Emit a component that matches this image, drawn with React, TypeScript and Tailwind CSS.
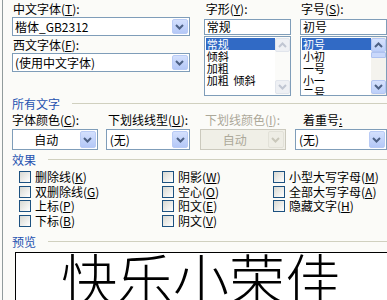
import React from "react";

const Chevron = ({ color, up }: { color: string; up?: boolean }) => (
  <svg width="9" height="6" viewBox="0 0 9 6">
    <path d={up ? "M1 5 L4.5 1.5 L8 5" : "M1 1 L4.5 4.5 L8 1"} fill="none" stroke={color} strokeWidth="2" />
  </svg>
);

function Combo({
  text,
  className,
  center,
  disabled,
}: {
  text: string;
  className: string;
  center?: boolean;
  disabled?: boolean;
}) {
  return (
    <div
      className={`flex border ${disabled ? "border-[#cbc9bd] bg-[#f0efe7]" : "border-[#7f9db9] bg-white"} ${className}`}
    >
      <div
        className={`flex-1 flex items-center ${center ? "justify-center" : "pl-[2px]"} ${disabled ? "text-[#aca899]" : "text-black"}`}
      >
        {text}
      </div>
      <div
        className={`my-[1px] mr-[1px] w-[16px] rounded-[2px] border flex items-center justify-center ${
          disabled
            ? "border-[#e2e1d8] bg-[#eeede5]"
            : "border-[#b9cbf5] bg-linear-to-b from-[#d4e0fd] to-[#b4c8f7]"
        }`}
      >
        <Chevron color={disabled ? "#c9c7ba" : "#4d6185"} />
      </div>
    </div>
  );
}

function ScrollBar({ enabled }: { enabled: boolean }) {
  const btn = enabled
    ? "border-[#b4c6f1] bg-linear-to-b from-[#d6e2fd] to-[#bccff9]"
    : "border-[#e1e5ec] bg-[#eef0f4]";
  const arrow = enabled ? "#4d6185" : "#c0c6d2";
  return (
    <div className={`w-[15px] flex flex-col py-[1px] ${enabled ? "bg-[#f4f3ee]" : "bg-[#fbfbf9]"}`}>
      <div className={`h-[14px] border rounded-[2px] flex items-center justify-center ${btn}`}>
        <Chevron color={arrow} up />
      </div>
      {enabled && <div className="h-[6px] border border-[#aec2f0] bg-[#c9d8fb] rounded-[1px]" />}
      <div className="flex-1" />
      <div className={`h-[14px] border rounded-[2px] flex items-center justify-center ${btn}`}>
        <Chevron color={arrow} />
      </div>
    </div>
  );
}

function ListBox({ items, enabled }: { items: string[]; enabled: boolean }) {
  return (
    <div className="mt-[1px] h-[60px] border border-[#7f9db9] bg-white flex overflow-hidden">
      <div className="flex-1 flex flex-col pt-[1px] pl-[1px]">
        {items.map((t, i) => (
          <div
            key={i}
            className={`h-[12px] leading-[12px] text-[11px] pl-[1px] whitespace-pre ${i === 0 ? "bg-[#316ac5] text-white" : "text-black"}`}
          >
            {t}
          </div>
        ))}
      </div>
      <ScrollBar enabled={enabled} />
    </div>
  );
}

function Check({ label, k }: { label: string; k: string }) {
  return (
    <div className="flex items-center h-[14.5px]">
      <div className="w-[12px] h-[12px] border border-[#1c5180] bg-linear-to-br from-[#d8d8d2] to-white" />
      <div className="ml-[4px] leading-none whitespace-nowrap">
        {label}(<u>{k}</u>)
      </div>
    </div>
  );
}

function Section({ title }: { title: string }) {
  return (
    <div className="flex items-center h-[15px]">
      <div className="text-[#2552b0] leading-none">{title}</div>
      <div className="ml-[12px] flex-1 h-px bg-[#d0d0bf]" />
    </div>
  );
}

export default function App() {
  return (
    <div className="w-[387px] h-[300px] overflow-hidden bg-[#fbfbf8] flex font-['Noto_Sans_CJK_SC',sans-serif] text-[12px] text-black">
      <div className="ml-[2px] border-l border-[#919b9c] flex-1 flex flex-col min-w-0">
        {/* tab strip */}
        <div className="h-[6px] flex items-start overflow-hidden">
          <div className="w-[59px] flex justify-center">
            <div className="-mt-[10px] h-[14px] leading-[14px] whitespace-nowrap">
              字体(<u>N</u>)
            </div>
          </div>
          <div className="w-[81px] h-[6px] border-l border-r border-b border-[#919b9c] bg-linear-to-b from-[#f4f3ee] to-[#e6e5de] flex justify-center">
            <div className="-mt-[10px] h-[14px] leading-[14px] whitespace-nowrap">
              字符间距(<u>R</u>)
            </div>
          </div>
          <div className="w-[87px] h-[6px] border-r border-b border-[#919b9c] bg-linear-to-b from-[#f4f3ee] to-[#e6e5de] flex justify-center">
            <div className="-mt-[10px] h-[14px] leading-[14px] whitespace-nowrap">
              文字效果(<u>X</u>)
            </div>
          </div>
        </div>

        <div className="pl-[9px] flex flex-col">
          {/* top row */}
          <div className="flex">
            <div className="w-[179px] flex flex-col">
              <div className="h-[17px] flex items-center pl-[1px] leading-none">
                中文字体(<u>T</u>):
              </div>
              <Combo text="楷体_GB2312" className="h-[19px]" />
              <div className="h-[17px] flex items-center pl-[1px] leading-none">
                西文字体(<u>F</u>):
              </div>
              <Combo text="(使用中文字体)" className="h-[19px]" />
            </div>
            <div className="ml-[14px] w-[88px] flex flex-col">
              <div className="h-[17px] flex items-center pl-[2px] leading-none">
                字形(<u>Y</u>):
              </div>
              <div className="mt-[2px] h-[16px] border border-[#7f9db9] bg-white flex items-center pl-[2px] leading-none">
                常规
              </div>
              <ListBox items={["常规", "倾斜", "加粗", "加粗  倾斜"]} enabled={false} />
            </div>
            <div className="ml-[9px] w-[87px] flex flex-col shrink-0">
              <div className="h-[17px] flex items-center pl-[1px] leading-none">
                字号(<u>S</u>):
              </div>
              <div className="mt-[2px] h-[16px] border border-[#7f9db9] bg-white flex items-center pl-[2px] leading-none">
                初号
              </div>
              <ListBox items={["初号", "小初", "一号", "小一", "二号"]} enabled />
            </div>
          </div>

          {/* all text */}
          <Section title="所有文字" />
          <div className="flex h-[17px] items-center leading-none">
            <div className="w-[96px]">
              字体颜色(<u>C</u>):
            </div>
            <div className="w-[97px]">
              下划线线型(<u>U</u>):
            </div>
            <div className="w-[97px] text-[#aca899]">
              下划线颜色(<u>I</u>):
            </div>
            <div className="pl-[1px]">
              着重号<u>:</u>
            </div>
          </div>
          <div className="mt-[1px] flex">
            <Combo text="自动" center className="h-[21px] w-[88px]" />
            <Combo text="(无)" className="ml-[8px] h-[21px] w-[87px] pl-[1px]" />
            <Combo text="自动" center disabled className="ml-[10px] h-[21px] w-[88px]" />
            <Combo text="(无)" className="ml-[9px] h-[21px] w-[92px] shrink-0 pl-[1px]" />
          </div>

          {/* effects */}
          <div className="mt-[2px]">
            <Section title="效果" />
          </div>
          <div className="mt-[3px] pl-[7px] grid grid-cols-[143px_111px_1fr]">
            <Check label="删除线" k="K" />
            <Check label="阴影" k="W" />
            <Check label="小型大写字母" k="M" />
            <Check label="双删除线" k="G" />
            <Check label="空心" k="O" />
            <Check label="全部大写字母" k="A" />
            <Check label="上标" k="P" />
            <Check label="阳文" k="E" />
            <Check label="隐藏文字" k="H" />
            <Check label="下标" k="B" />
            <Check label="阴文" k="V" />
            <div />
          </div>

          {/* preview */}
          <div className="mt-[6px]">
            <Section title="预览" />
          </div>
          <div className="mt-[3px] ml-[3px] w-[380px] h-[60px] border border-black bg-white pl-[45px] overflow-hidden">
            <div className="text-[56px] font-light leading-[48px] whitespace-nowrap">快乐小荣佳</div>
          </div>
        </div>
      </div>
    </div>
  );
}
